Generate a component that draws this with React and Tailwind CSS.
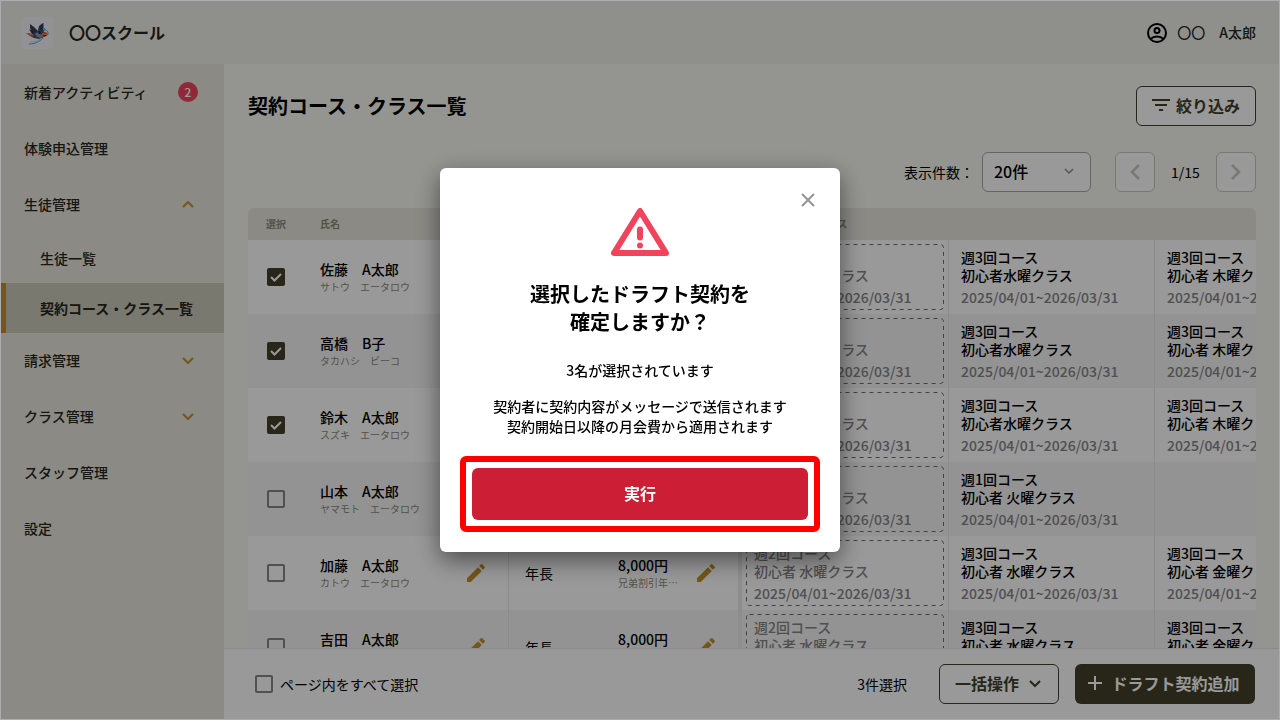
import { useState } from 'react';
import { MdEdit } from 'react-icons/md';

const navItems = [
  { label: '新着アクティビティ', badge: 2 },
  { label: '体験申込管理' },
  {
    label: '生徒管理',
    open: true,
    children: [
      { label: '生徒一覧' },
      { label: '契約コース・クラス一覧', active: true },
    ],
  },
  { label: '請求管理', open: false },
  { label: 'クラス管理', open: false },
  { label: 'スタッフ管理' },
  { label: '設定' },
];

const PERIOD = '2025/04/01~2026/03/31';

const students = [
  { id: 1, name: '佐藤　A太郎', kana: 'サトウ　エータロウ', selected: true,  courses: ['初心者水曜クラス', '初心者 木曜クラス'] },
  { id: 2, name: '高橋　B子',   kana: 'タカハシ　ビーコ',   selected: true,  courses: ['初心者水曜クラス', '初心者 木曜クラス'] },
  { id: 3, name: '鈴木　A太郎', kana: 'スズキ　エータロウ', selected: true,  courses: ['初心者水曜クラス', '初心者 木曜クラス'] },
  { id: 4, name: '山本　A太郎', kana: 'ヤマモト　エータロウ', selected: false, plan: '週1回コース', courses: ['初心者 火曜クラス'] },
  { id: 5, name: '加藤　A太郎', kana: 'カトウ　エータロウ', selected: false, courses: ['初心者 水曜クラス', '初心者 金曜クラス'] },
  { id: 6, name: '吉田　A太郎', kana: 'ヨシダ　エータロウ', selected: false, courses: ['初心者 水曜クラス', '初心者 金曜クラス'] },
];

function Chevron({ className, d = 'M1 1l5 5 5-5', box = '0 0 12 7', stroke = 2 }) {
  return (
    <svg viewBox={box} className={className} fill="none" stroke="currentColor" strokeWidth={stroke} aria-hidden="true">
      <path d={d} />
    </svg>
  );
}

function Logo() {
  return (
    <svg viewBox="0 0 32 32" className="h-8 w-8 shrink-0 rounded bg-[#f4f4f8]" aria-hidden="true">
      <path d="M9 7l4 3 4 4 1 4-3 1-4-3-2-5z" fill="#3a4058" />
      <path d="M8 12l6 4 2 4-5-3z" fill="#242f52" />
      <path d="M18 9l4-3 0 5 1 3-4 2-2-3z" fill="#3c4c6c" />
      <path d="M20 8l2-1-1 5-2 1z" fill="#27324e" />
      <path d="M22 6h1v5l2 2-2 1-1-3z" fill="#59b4ee" />
      <path d="M5 16l4 0 5 2 2 3-3 0-6-3z" fill="#d08370" />
      <path d="M8 18l6 1-1 2z" fill="#8a4c48" />
      <path d="M12 16l7-3 5 2-1 5-5 2-5-1z" fill="#4b4a60" />
      <path d="M14 17l3-2 1 2 4 1-2 3-4-1z" fill="#8199bd" />
      <path d="M17 15l2-1 1 2-2 1z" fill="#202a44" />
      <path d="M21 16l4-1 2 2-1 2-4 1-2-1z" fill="#e8703b" />
      <path d="M22 18l4 0-3 2z" fill="#7b2e24" />
      <path d="M8 27c6 0 10-2 14-6" stroke="#4ca3df" strokeWidth="1" fill="none" />
      <path d="M10 25c4 0 7-1 9-3" stroke="#b9d9ee" strokeWidth="1" fill="none" />
      <path d="M23 11l4 4v3" stroke="#6ab0e0" strokeWidth="1" fill="none" />
    </svg>
  );
}

function Header() {
  return (
    <header className="flex h-[63px] shrink-0 items-center justify-between bg-[#eff0e8] pl-5 pr-[23px]">
      <div className="flex items-center gap-4">
        <Logo />
        <span className="pb-0.5 text-base font-bold text-[#27261a]">〇〇スクール</span>
      </div>
      <div className="flex items-center gap-2 text-sm font-medium text-[#27261a]">
        <svg viewBox="0 0 24 24" className="h-6 w-6 text-black" fill="none" stroke="currentColor" strokeWidth="2" aria-hidden="true">
          <circle cx="12" cy="12" r="9" />
          <circle cx="12" cy="9.5" r="2.5" />
          <path d="M5.500 18c3.500-3.200 9.500-3.200 13 0" />
        </svg>
        <span className="pb-0.5">〇〇　A太郎</span>
      </div>
    </header>
  );
}

function Sidebar() {
  return (
    <nav className="w-[223px] shrink-0 bg-[#e8e6de] text-sm font-medium text-[#27261a]">
      <ul>
        {navItems.map((item) => (
          <li key={item.label}>
            <a href="#" className="flex h-14 items-center justify-between pl-[23px] pr-[26px]">
              <span>{item.label}</span>
              {item.badge && (
                <span className="flex h-5 w-5 items-center justify-center rounded-full bg-[#ef445c] text-xs text-white">
                  {item.badge}
                </span>
              )}
              {item.open === true && <Chevron d="M1 6l5-5 5 5" className="mr-1 w-3 text-[#c0902a]" />}
              {item.open === false && <Chevron className="mr-1 w-3 text-[#c0902a]" />}
            </a>
            {item.children && (
              <ul className="-mb-px mt-px">
                {item.children.map((child) => (
                  <li key={child.label}>
                    <a
                      href="#"
                      className={
                        child.active
                          ? 'flex h-[50px] items-center border-l-[5px] border-[#c0902a] bg-[#cbcaba] pl-[34px] font-bold'
                          : 'flex h-[50px] items-center pl-[39px]'
                      }
                    >
                      {child.label}
                    </a>
                  </li>
                ))}
              </ul>
            )}
          </li>
        ))}
      </ul>
    </nav>
  );
}

function Checkbox({ id, label, checked, onChange }) {
  return (
    <span className="relative flex h-[18px] w-[18px] shrink-0">
      <input
        id={id}
        type="checkbox"
        aria-label={label}
        checked={checked}
        onChange={onChange}
        className="h-[18px] w-[18px] appearance-none rounded-xs border-2 border-[#858585] checked:border-[#433f2a] checked:bg-[#433f2a]"
      />
      {checked && (
        <svg viewBox="0 0 18 18" className="pointer-events-none absolute inset-0" fill="none" stroke="white" strokeWidth="2" aria-hidden="true">
          <path d="M4 9l3.500 3.500L14 6" />
        </svg>
      )}
    </span>
  );
}

function Toolbar() {
  return (
    <>
      <div className="flex items-center justify-between">
        <h1 className="text-xl font-bold text-black">契約コース・クラス一覧</h1>
        <button className="flex h-10 w-[120px] items-center justify-center gap-1.5 rounded-md border border-[#433f2a] bg-white pb-0.5 font-bold text-[#433f2a]">
          <svg viewBox="0 0 18 12" className="w-[18px]" fill="currentColor" aria-hidden="true">
            <path d="M0 0h18v2H0zM3 5h12v2H3zM7 10h4v2H7z" />
          </svg>
          絞り込み
        </button>
      </div>
      <div className="mt-[26px] flex items-center justify-end text-sm text-black">
        <label htmlFor="per-page">表示件数：</label>
        <div className="relative ml-2 mr-6">
          <select
            id="per-page"
            className="h-10 w-[109px] appearance-none rounded-md border border-[#a8a8ac] bg-white pb-0.5 pl-[11px] text-base font-medium"
          >
            <option>20件</option>
          </select>
          <Chevron className="pointer-events-none absolute right-4 top-4 w-3 text-[#8e8e92]" d="M2 1l4 4 4-4" stroke={1.5} />
        </div>
        <button aria-label="前のページ" className="flex h-10 w-10 items-center justify-center rounded-md border border-[#cbcaba] bg-white">
          <Chevron box="0 0 10 16" d="M9 1L2 8l7 7" stroke={2.5} className="w-[10px] text-[#cbcaba]" />
        </button>
        <span className="w-[61px] text-center">1/15</span>
        <button aria-label="次のページ" className="flex h-10 w-10 items-center justify-center rounded-md border border-[#cbcaba] bg-white">
          <Chevron box="0 0 10 16" d="M1 1l7 7-7 7" stroke={2.5} className="w-[10px] text-[#cbcaba]" />
        </button>
      </div>
    </>
  );
}

function Course({ plan, name }) {
  return (
    <>
      <p className="leading-[18px]">{plan}</p>
      <p className="leading-[18px]">{name}</p>
      <p className="mt-1 leading-[18px] text-[#858585]">{PERIOD}</p>
    </>
  );
}

function StudentRow({ student, checked, onToggle }) {
  return (
    <tr className="h-[74px] bg-white even:bg-[#f5f5f5]">
      <td className="pl-[19px]">
        <Checkbox label={student.name} checked={checked} onChange={onToggle} />
      </td>
      <td className="border-r border-[#e8e8e8] pl-4 pr-5">
        <div className="flex items-center justify-between">
          <div>
            <p className="leading-[18px]">{student.name}</p>
            <p className="mt-0.5 text-[10px] font-normal leading-[14px] text-[#8c8a78]">{student.kana}</p>
          </div>
          <button aria-label={`${student.name}を編集`}>
            <MdEdit className="h-6 w-6 text-[#c0902a]" />
          </button>
        </div>
      </td>
      <td className="pl-4 font-normal">年長</td>
      <td className="border-r-4 border-[#ececec] pl-4 pr-5">
        <div className="flex items-center justify-between">
          <div>
            <p className="leading-[18px]">8,000円</p>
            <p className="mt-0.5 text-[10px] font-normal leading-[14px] text-[#8c8a78]">兄弟割引年…</p>
          </div>
          <button aria-label={`${student.name}の月会費を編集`}>
            <MdEdit className="h-6 w-6 text-[#c0902a]" />
          </button>
        </div>
      </td>
      <td className="border-r border-[#e8e8e8] px-1">
        <div className="relative h-[66px] px-2 pt-1 text-[#858585]">
          <svg className="absolute inset-0 h-full w-full" aria-hidden="true">
            <rect x="0.5" y="0.5" width="197" height="65" rx="3" fill="none" stroke="#6e6e6e" strokeDasharray="4 4" />
          </svg>
          <Course plan="週2回コース" name="初心者 水曜クラス" />
        </div>
      </td>
      {[0, 1].map((i) => (
        <td key={i} className="border-r border-[#e8e8e8] pl-3">
          {student.courses[i] && <Course plan={student.plan || '週3回コース'} name={student.courses[i]} />}
        </td>
      ))}
    </tr>
  );
}

function StudentTable({ selected, onToggle }) {
  return (
    <div className="mt-4 min-h-0 flex-1 overflow-hidden rounded-t-md">
      <table className="w-[1155px] table-fixed border-separate border-spacing-0 whitespace-nowrap text-left text-sm font-medium text-black">
        <colgroup>
          <col className="w-14" />
          <col className="w-[205px]" />
          <col className="w-[93px]" />
          <col className="w-[140px]" />
          <col className="w-[207px]" />
          <col className="w-[206px]" />
          <col />
        </colgroup>
        <thead>
          <tr className="h-8 bg-[#e8e6de] text-[10px] text-[#8c8a78]">
            <th className="pl-[18px] font-bold">選択</th>
            <th className="pl-4 font-bold">氏名</th>
            <th className="pl-4 font-bold">学年</th>
            <th className="pl-4 font-bold">月会費</th>
            <th className="pl-4 font-bold" colSpan={3}>契約コース・クラス</th>
          </tr>
        </thead>
        <tbody>
          {students.map((s) => (
            <StudentRow key={s.id} student={s} checked={selected.includes(s.id)} onToggle={() => onToggle(s.id)} />
          ))}
        </tbody>
      </table>
    </div>
  );
}

function ActionBar({ count, allChecked, onToggleAll }) {
  return (
    <footer className="flex h-[71px] shrink-0 items-center border-t border-[#e8e8e8] bg-white pl-[31px] pr-6 text-sm text-black">
      <Checkbox id="select-all" checked={allChecked} onChange={onToggleAll} />
      <label htmlFor="select-all" className="ml-[7px]">ページ内をすべて選択</label>
      <span className="ml-auto mr-8">{count}件選択</span>
      <button className="mr-4 flex h-10 w-[120px] items-center justify-center gap-2 rounded-md border border-[#433f2a] bg-white pb-0.5 text-base font-bold text-[#433f2a]">
        一括操作
        <Chevron className="w-4" box="-2 -1 16 9" />
      </button>
      <button className="flex h-10 w-[180px] items-center justify-center gap-2 rounded-md bg-[#433f2a] pb-0.5 pr-[3px] text-base font-bold text-white">
        <svg viewBox="0 0 16 16" className="w-4" stroke="currentColor" strokeWidth="2" aria-hidden="true">
          <path d="M8 1v14M1 8h14" />
        </svg>
        ドラフト契約追加
      </button>
    </footer>
  );
}

function ConfirmDialog({ count, onClose }) {
  return (
    <div className="fixed inset-px z-50 flex items-center justify-center bg-black/40">
      <div
        role="dialog"
        aria-modal="true"
        aria-labelledby="confirm-title"
        className="relative w-[400px] rounded-md bg-white px-5 pb-5 pt-10 text-center text-black shadow-[0_8px_24px_rgba(0,0,0,0.5)]"
      >
        <button aria-label="閉じる" onClick={onClose} className="absolute right-[25px] top-[25px] text-[#949494]">
          <svg viewBox="0 0 14 14" className="w-[14px]" fill="none" stroke="currentColor" strokeWidth="2" aria-hidden="true">
            <path d="M1 1l12 12M13 1L1 13" />
          </svg>
        </button>
        <svg viewBox="0 0 58 48" className="mx-auto h-12 w-[58px]" fill="none" stroke="#ef445c" strokeWidth="6" strokeLinejoin="round" strokeLinecap="round" aria-hidden="true">
          <path d="M29 3L3 45h52z" />
          <path d="M29 21.500v8M29 37.500v0" />
        </svg>
        <h2 id="confirm-title" className="mt-6 text-xl font-bold leading-7">
          選択したドラフト契約を
          <br />
          確定しますか？
        </h2>
        <p className="mt-6 text-sm font-medium leading-5">{count}名が選択されています</p>
        <p className="mt-4 text-sm font-medium leading-5">
          契約者に契約内容がメッセージで送信されます
          <br />
          契約開始日以降の月会費から適用されます
        </p>
        <div className="mt-5 rounded-md border-[6px] border-[#ff0000] p-[6px]">
          <button className="h-[52px] w-full rounded-md bg-[#cc1e34] pb-0.5 text-base font-bold text-white">実行</button>
        </div>
      </div>
    </div>
  );
}

export default function App() {
  const [selected, setSelected] = useState(students.filter((s) => s.selected).map((s) => s.id));
  const [dialogOpen, setDialogOpen] = useState(true);

  const toggle = (id) => {
    setSelected((prev) => (prev.includes(id) ? prev.filter((x) => x !== id) : [...prev, id]));
  };

  const allChecked = selected.length === students.length;
  const toggleAll = () => setSelected(allChecked ? [] : students.map((s) => s.id));

  return (
    <div className="flex h-screen flex-col overflow-hidden border border-[#acacb0] font-['Noto_Sans_CJK_JP',sans-serif]">
      <Header />
      <div className="flex min-h-0 flex-1">
        <Sidebar />
        <main className="flex min-w-0 flex-1 flex-col bg-[#f7f8f0]">
          <div className="flex min-h-0 flex-1 flex-col pl-6 pr-[23px] pt-[22px]">
            <Toolbar />
            <StudentTable selected={selected} onToggle={toggle} />
          </div>
          <ActionBar count={selected.length} allChecked={allChecked} onToggleAll={toggleAll} />
        </main>
      </div>
      {dialogOpen && <ConfirmDialog count={selected.length} onClose={() => setDialogOpen(false)} />}
    </div>
  );
}
